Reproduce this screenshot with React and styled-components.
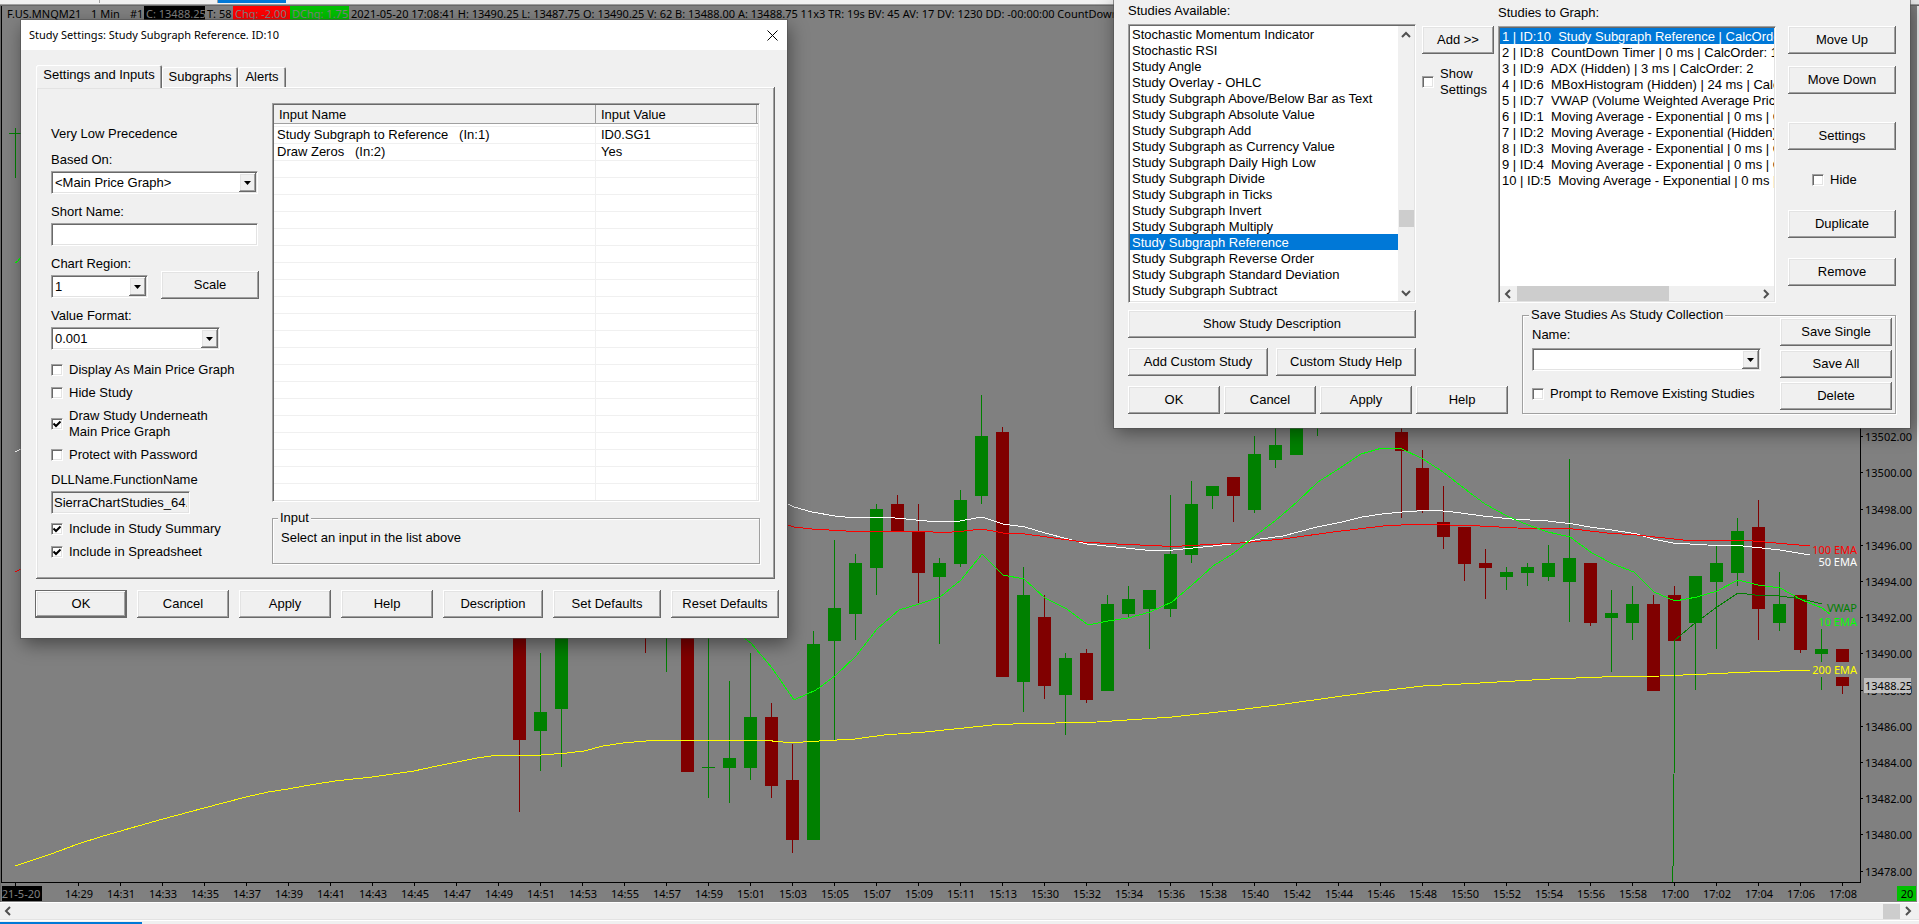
import React, { useState } from 'react';
import styled, { createGlobalStyle, css } from 'styled-components';

const INPUTS = [
  { name: 'Study Subgraph to Reference   (In:1)', value: 'ID0.SG1' },
  { name: 'Draw Zeros   (In:2)', value: 'Yes' },
];

const AVAILABLE = [
  'Stochastic Momentum Indicator',
  'Stochastic RSI',
  'Study Angle',
  'Study Overlay - OHLC',
  'Study Subgraph Above/Below Bar as Text',
  'Study Subgraph Absolute Value',
  'Study Subgraph Add',
  'Study Subgraph as Currency Value',
  'Study Subgraph Daily High Low',
  'Study Subgraph Divide',
  'Study Subgraph in Ticks',
  'Study Subgraph Invert',
  'Study Subgraph Multiply',
  'Study Subgraph Reference',
  'Study Subgraph Reverse Order',
  'Study Subgraph Standard Deviation',
  'Study Subgraph Subtract',
  'Study Subgraphs Add',
];

const TO_GRAPH = [
  '1 | ID:10  Study Subgraph Reference | CalcOrder: 10',
  '2 | ID:8  CountDown Timer | 0 ms | CalcOrder: 1',
  '3 | ID:9  ADX (Hidden) | 3 ms | CalcOrder: 2',
  '4 | ID:6  MBoxHistogram (Hidden) | 24 ms | CalcOrder: 3',
  '5 | ID:7  VWAP (Volume Weighted Average Price) | 0 ms',
  '6 | ID:1  Moving Average - Exponential | 0 ms | CalcOrder: 5',
  '7 | ID:2  Moving Average - Exponential (Hidden) | 0 ms',
  '8 | ID:3  Moving Average - Exponential | 0 ms | CalcOrder: 7',
  '9 | ID:4  Moving Average - Exponential | 0 ms | CalcOrder: 8',
  '10 | ID:5  Moving Average - Exponential | 0 ms | CalcOrder: 9',
];

// slot, direction, high, low, body top, body bottom
const CANDLES = [
  [24, 'd', 600, 812, 600, 740],
  [25, 'u', 653, 771, 712, 731],
  [26, 'u', 600, 767, 600, 709],
  [30, 'd', 600, 653, 600, 610],
  [31, 'u', 600, 672, 600, 610],
  [32, 'd', 600, 772, 600, 772],
  [33, 'u', 600, 798, 767, 768],
  [34, 'u', 681, 803, 758, 768],
  [35, 'u', 653, 780, 717, 768],
  [36, 'd', 703, 798, 717, 786],
  [37, 'd', 744, 853, 780, 840],
  [38, 'u', 631, 840, 644, 840],
  [39, 'u', 540, 740, 608, 641],
  [40, 'u', 554, 640, 563, 614],
  [41, 'u', 504, 595, 509, 568],
  [42, 'd', 495, 532, 504, 532],
  [43, 'd', 504, 603, 532, 573],
  [44, 'u', 558, 644, 563, 577],
  [45, 'u', 490, 567, 500, 564],
  [46, 'u', 395, 504, 436, 496],
  [47, 'd', 427, 677, 432, 677],
  [48, 'u', 567, 712, 595, 682],
  [49, 'd', 595, 699, 617, 686],
  [50, 'u', 653, 735, 658, 695],
  [51, 'd', 649, 703, 653, 700],
  [52, 'u', 595, 691, 604, 691],
  [53, 'u', 586, 618, 599, 614],
  [54, 'u', 590, 649, 590, 609],
  [55, 'u', 495, 617, 554, 609],
  [56, 'u', 481, 563, 504, 555],
  [57, 'u', 486, 509, 486, 496],
  [58, 'd', 477, 522, 477, 496],
  [59, 'u', 436, 513, 454, 510],
  [60, 'u', 410, 468, 445, 460],
  [61, 'u', 410, 455, 410, 455],
  [62, 'u', 410, 436, 410, 412],
  [66, 'd', 410, 518, 432, 451],
  [67, 'd', 450, 513, 468, 510],
  [68, 'd', 486, 549, 522, 537],
  [69, 'd', 527, 581, 527, 564],
  [70, 'd', 549, 599, 563, 568],
  [71, 'u', 567, 590, 572, 577],
  [72, 'u', 563, 586, 567, 573],
  [73, 'u', 545, 581, 563, 577],
  [74, 'u', 459, 622, 558, 582],
  [75, 'd', 563, 626, 563, 623],
  [76, 'u', 590, 672, 613, 618],
  [77, 'u', 586, 640, 604, 623],
  [78, 'd', 595, 691, 604, 691],
  [79, 'd', 586, 686, 595, 641],
  [80, 'u', 576, 690, 576, 623],
  [81, 'u', 546, 649, 563, 582],
  [82, 'u', 518, 586, 531, 573],
  [83, 'd', 500, 640, 527, 609],
  [84, 'u', 572, 631, 604, 623],
  [85, 'd', 595, 653, 595, 650],
  [86, 'u', 629, 690, 649, 654],
  [87, 'd', 649, 694, 649, 686],
];

const EMA_200 =
  '15,866 51,854 78,844 100,837 131,828 163,819 204,808 246,797 268,792 288,789 310,785 335,781 372,777 414,771 437,766 457,762 477,758 498,755 541,755 567,753 584,751 603,746 623,743 657,740 762,740 783,742 803,742 819,741 855,739 884,735 925,732 964,728 992,725 1013,724 1056,723 1097,722 1127,720 1172,717 1190,715 1237,710 1285,704 1335,697 1380,691 1423,686 1480,683 1550,679 1602,677 1660,676 1707,674 1750,672 1810,670';
const EMA_50 =
  '788,504 794,507 812,512 835,516 855,518 885,517 916,520 937,522 960,521 982,517 1003,524 1025,527 1045,533 1087,544 1145,550 1173,550 1213,546 1240,543 1260,539 1283,536 1317,527 1342,522 1362,517 1382,514 1402,512 1433,510 1453,512 1483,516 1512,519 1548,521 1573,524 1590,527 1612,530 1637,534 1653,539 1673,543 1707,545 1743,546 1780,550 1810,555';
const EMA_100 =
  '788,525 794,527 812,529 846,531 925,531 941,533 964,531 982,529 1003,533 1025,534 1047,537 1083,542 1117,544 1162,546 1182,546 1200,545 1240,543 1283,539 1333,532 1383,526 1420,524 1480,526 1517,528 1573,529 1607,533 1637,535 1683,540 1742,540 1810,546';
const EMA_10 =
  '744,638 751,643 772,668 794,700 816,690 835,676 856,656 877,629 899,610 919,604 940,597 961,580 982,554 1003,575 1024,579 1045,598 1067,609 1088,625 1108,621 1128,618 1150,612 1172,602 1192,585 1213,566 1234,553 1255,536 1275,521 1297,502 1318,482 1340,468 1361,454 1382,448 1402,449 1423,459 1443,472 1465,489 1485,504 1507,516 1528,525 1548,532 1570,537 1592,553 1613,564 1634,572 1654,592 1675,601 1697,597 1717,591 1738,580 1758,585 1780,588 1802,600 1822,608 1830,614';
const VWAP =
  '1672,882 1672,867 1673,866 1673,777 1674,776 1675,640 1695,623 1702,618 1717,607 1738,593 1755,595 1780,596 1802,599 1822,604';

const PRICES = [
  [13502, 436], [13500, 472], [13498, 509], [13496, 545], [13494, 581], [13492, 617], [13490, 653],
  [13488, 690], [13486, 726], [13484, 762], [13482, 798], [13480, 834], [13478, 871],
];

const timeLabels = () => {
  const out = [];
  const push = (hour, from, to) => {
    for (let m = from; m <= to; m += 2) out.push(`${hour}:${String(m).padStart(2, '0')}`);
  };
  push(14, 29, 59);
  push(15, 1, 13);
  push(15, 30, 58);
  push(17, 0, 8);
  return out;
};

const slotX = (slot) => 15 + slot * 21;

const Chevron = ({ dir }) => {
  const paths = { up: 'M1 6 L5 2 L9 6', down: 'M1 3 L5 7 L9 3', left: 'M6 1 L2 5 L6 9', right: 'M3 1 L7 5 L3 9' };
  return (
    <svg width="10" height="10" viewBox="0 0 10 10">
      <path d={paths[dir]} fill="none" stroke="#505050" strokeWidth="2" />
    </svg>
  );
};

const Chart = () => (
  <ChartSvg viewBox="1 20 1916 882" preserveAspectRatio="xMaxYMax meet">
    <g shapeRendering="crispEdges">
      <rect x="1" y="20" width="1" height="863" />
      <rect x="1" y="882" width="1860" height="1" />
      <rect x="1860" y="20" width="1" height="863" />
      <rect x="15" y="883" width="1" height="3" />
      {timeLabels().map((t, i) => (
        <rect key={t} x={78 + i * 42} y="883" width="1" height="3" />
      ))}
      {PRICES.map(([p, y]) => (
        <rect key={p} x="1861" y={y} width="2" height="1" />
      ))}
      <g fill="#008000">
        <rect x="15" y="128" width="1" height="50" />
        <rect x="9" y="133" width="13" height="1" />
      </g>
      {CANDLES.map(([slot, dir, high, low, top, bottom]) => (
        <g key={slot} fill={dir === 'u' ? '#008000' : '#800000'}>
          <rect x={slotX(slot)} y={high} width="1" height={low - high} />
          <rect x={slotX(slot) - 6} y={top} width="13" height={bottom - top} />
        </g>
      ))}
      <g fill="none" strokeWidth="1">
        <polyline points={EMA_200} stroke="#ffff00" />
        <polyline points={EMA_50} stroke="#ffffff" />
        <polyline points={EMA_100} stroke="#ff0000" />
        <polyline points={VWAP} stroke="#008000" />
        <polyline points={EMA_10} stroke="#00ff00" />
        <path d="M15 263 L18 261 L21 257" stroke="#00ff00" />
        <path d="M15 452 L21 449" stroke="#ffffff" />
        <path d="M15 572 L21 569" stroke="#ff0000" />
      </g>
      <rect x="1817" y="615" width="41" height="14" fill="#808080" />
      <rect x="1812" y="662" width="46" height="15" fill="#808080" />
    </g>
    <g textAnchor="end">
      <text x="1857" y="554" fill="#ff0000">100 EMA</text>
      <text x="1857" y="566" fill="#ffffff">50 EMA</text>
      <text x="1857" y="612" fill="#008000">VWAP</text>
      <text x="1857" y="626" fill="#00ff00">10 EMA</text>
      <text x="1857" y="674" fill="#ffff00">200 EMA</text>
    </g>
    {PRICES.map(([p, y]) => (
      <text key={p} x="1865" y={y + 5}>{p}.00</text>
    ))}
    <rect x="1864" y="678" width="47" height="15" fill="#c0c0c0" />
    <text x="1865" y="690">13488.25</text>
    <g textAnchor="middle">
      {timeLabels().map((t, i) => (
        <text key={t} x={79 + i * 42} y="898">{t}</text>
      ))}
      <rect x="2" y="886" width="40" height="15" />
      <text x="21" y="898" fill="#808080">21-5-20</text>
      <rect x="1897" y="886" width="19" height="15" fill="#00c000" />
      <text x="1907" y="898">20</text>
    </g>
  </ChartSvg>
);

const Combo = ({ id, value, width, label }) => (
  <ComboBox $width={width}>
    <ComboSelect id={id} defaultValue={value} aria-label={label}>
      <option value={value}>{value}</option>
    </ComboSelect>
    <ComboArrow aria-hidden="true">
      <svg width="7" height="4" viewBox="0 0 7 4">
        <path d="M0 0 H7 L3.5 4 Z" />
      </svg>
    </ComboArrow>
  </ComboBox>
);

const Check = ({ children, checked = false }) => {
  const [on, setOn] = useState(checked);
  return (
    <CheckLabel>
      <CheckInput type="checkbox" checked={on} onChange={() => setOn(!on)} />
      <span>{children}</span>
    </CheckLabel>
  );
};

const StudySettings = () => (
  <SettingsWindow role="dialog" aria-label="Study Settings">
    <TitleBar>
      Study Settings: Study Subgraph Reference. ID:10
      <CloseButton aria-label="Close">
        <svg width="11" height="11" viewBox="0 0 11 11">
          <path d="M0.5 0.5 L10.5 10.5 M10.5 0.5 L0.5 10.5" stroke="#000" fill="none" />
        </svg>
      </CloseButton>
    </TitleBar>
    <SettingsBody>
      <Tabs role="tablist">
        <Tab role="tab" $active $width={126}>Settings and Inputs</Tab>
        <Tab role="tab" $width={76}>Subgraphs</Tab>
        <Tab role="tab" $width={48}>Alerts</Tab>
      </Tabs>
      <TabPane>
        <FieldColumn>
          <div>Very Low Precedence</div>
          <Field>
            <label htmlFor="based-on">Based On:</label>
            <Combo id="based-on" value="<Main Price Graph>" width={207} />
          </Field>
          <Field>
            <label htmlFor="short-name">Short Name:</label>
            <TextInput id="short-name" type="text" $width={207} />
          </Field>
          <RegionRow>
            <Field>
              <label htmlFor="region">Chart Region:</label>
              <Combo id="region" value="1" width={97} />
            </Field>
            <Button $width={98}>Scale</Button>
          </RegionRow>
          <Field>
            <label htmlFor="format">Value Format:</label>
            <Combo id="format" value="0.001" width={169} />
          </Field>
          <Checks>
            <Check>Display As Main Price Graph</Check>
            <Check>Hide Study</Check>
            <Check checked>Draw Study Underneath<br />Main Price Graph</Check>
            <Check>Protect with Password</Check>
            <Field>
              <label htmlFor="dll">DLLName.FunctionName</label>
              <TextInput id="dll" type="text" readOnly defaultValue="SierraChartStudies_64.scsf" $width={139} />
            </Field>
            <Check checked>Include in Study Summary</Check>
            <Check checked>Include in Spreadsheet</Check>
          </Checks>
        </FieldColumn>
        <InputColumn>
          <TableFrame>
            <InputTable>
              <colgroup>
                <col width="322" />
                <col width="161" />
                <col />
              </colgroup>
              <thead>
                <tr>
                  <th>Input Name</th>
                  <th>Input Value</th>
                  <th />
                </tr>
              </thead>
              <tbody>
                {Array.from({ length: 22 }, (_, i) => (
                  <tr key={i}>
                    <td>{INPUTS[i]?.name}</td>
                    <td>{INPUTS[i]?.value}</td>
                    <td />
                  </tr>
                ))}
              </tbody>
            </InputTable>
          </TableFrame>
          <InputGroup>
            <legend>Input</legend>
            Select an input in the list above
          </InputGroup>
        </InputColumn>
      </TabPane>
      <ButtonRow $gap={10}>
        <Button $width={92} $default>OK</Button>
        <Button $width={92}>Cancel</Button>
        <Button $width={92}>Apply</Button>
        <Button $width={92}>Help</Button>
        <Button $width={100}>Description</Button>
        <Button $width={108}>Set Defaults</Button>
        <Button $width={108}>Reset Defaults</Button>
      </ButtonRow>
    </SettingsBody>
  </SettingsWindow>
);

const ChartStudies = () => {
  const [available, setAvailable] = useState(13);
  const [graphed, setGraphed] = useState(0);

  return (
    <StudiesWindow role="dialog" aria-label="Chart Studies">
      <StudiesTop>
        <ListColumn $top={3} $gap={5} $width={288}>
          <div>Studies Available:</div>
          <ListFrame>
            <List role="listbox" aria-label="Studies Available">
              {AVAILABLE.map((s, i) => (
                <ListItem key={s} role="option" $selected={i === available} onClick={() => setAvailable(i)}>{s}</ListItem>
              ))}
            </List>
            <VScroll>
              <Chevron dir="up" />
              <VTrack><VThumb /></VTrack>
              <Chevron dir="down" />
            </VScroll>
          </ListFrame>
        </ListColumn>
        <AddColumn>
          <Button $width={72}>Add &gt;&gt;</Button>
          <Check>Show<br />Settings</Check>
        </AddColumn>
        <ListColumn $top={5} $gap={5} $width={278}>
          <div>Studies to Graph:</div>
          <ListFrame $stacked>
            <List role="listbox" aria-label="Studies to Graph">
              {TO_GRAPH.map((s, i) => (
                <ListItem key={s} role="option" $selected={i === graphed} onClick={() => setGraphed(i)}>{s}</ListItem>
              ))}
            </List>
            <HScroll>
              <Chevron dir="left" />
              <HTrack><HThumb /></HTrack>
              <Chevron dir="right" />
            </HScroll>
          </ListFrame>
        </ListColumn>
        <ActionColumn>
          <ButtonStack $gap={12}>
            <Button>Move Up</Button>
            <Button>Move Down</Button>
          </ButtonStack>
          <Button>Settings</Button>
          <HideRow><Check>Hide</Check></HideRow>
          <ButtonStack $gap={20}>
            <Button>Duplicate</Button>
            <Button>Remove</Button>
          </ButtonStack>
        </ActionColumn>
      </StudiesTop>
      <StudiesBottom>
        <CommandColumn>
          <Button $width={288}>Show Study Description</Button>
          <ButtonRow $gap={8}>
            <Button $width={140}>Add Custom Study</Button>
            <Button $width={140}>Custom Study Help</Button>
          </ButtonRow>
          <ButtonRow $gap={4}>
            <Button $width={92}>OK</Button>
            <Button $width={92}>Cancel</Button>
            <Button $width={92}>Apply</Button>
            <Button $width={92}>Help</Button>
          </ButtonRow>
        </CommandColumn>
        <CollectionGroup>
          <legend>Save Studies As Study Collection</legend>
          <CollectionBody>
            <CollectionFields>
              <label htmlFor="collection">Name:</label>
              <Combo id="collection" value="" width={229} />
              <Check>Prompt to Remove Existing Studies</Check>
            </CollectionFields>
            <CollectionButtons>
              <Button $width={112}>Save Single</Button>
              <Button $width={112}>Save All</Button>
              <Button $width={112}>Delete</Button>
            </CollectionButtons>
          </CollectionBody>
        </CollectionGroup>
      </StudiesBottom>
    </StudiesWindow>
  );
};

const App = () => (
  <>
    <GlobalStyle />
    <Page>
      <TopStrip>
        <StripTab $width={100} />
        <StripTab $width={118} />
        <StripTab $width={69} $active />
      </TopStrip>
      <ChartFrame>
        <ChartHeader>
          <HeaderItem $width={84}>F.US.MNQM21</HeaderItem>
          <HeaderItem $width={39}>1 Min</HeaderItem>
          <HeaderItem $width={16}>#1</HeaderItem>
          <HeaderItem $width={61} $bg="#000000">C: 13488.25</HeaderItem>
          <HeaderItem $width={28}>T: 58</HeaderItem>
          <HeaderItem $width={57} $bg="#ff0000">Chg: -2.00</HeaderItem>
          <HeaderItem $width={59} $bg="#00c000">DChg: 1.75</HeaderItem>
          <HeaderItem>
            2021-05-20 17:08:41 H: 13490.25 L: 13487.75 O: 13490.25 V: 62 B: 13488.00 A: 13488.75 11x3 TR: 19s BV: 45
            AV: 17 DV: 1230 DD: -00:00:00 CountDown
          </HeaderItem>
        </ChartHeader>
        <Chart />
      </ChartFrame>
      <PageScroll>
        <Chevron dir="left" />
        <PageTrack><PageThumb /></PageTrack>
        <Chevron dir="right" />
      </PageScroll>
      <BottomStrip><BottomTab /></BottomStrip>
      <StudySettings />
      <ChartStudies />
    </Page>
  </>
);

const GlobalStyle = createGlobalStyle`
  * {
    box-sizing: border-box;
  }

  body {
    margin: 0;
    background: #f0f0f0;
    color: #000;
    font: 13px/16px "Liberation Sans", Arial, sans-serif;
  }

  button, input, select {
    font: inherit;
    color: inherit;
  }
`;

const chartFont = css`
  font-family: "Noto Sans", "Open Sans", sans-serif;
`;

const raised = css`
  box-shadow: inset -1px -1px 0 #696969, inset 1px 1px 0 #fff, inset -2px -2px 0 #a0a0a0, inset 2px 2px 0 #e3e3e3;
`;

const sunken = css`
  border: 1px solid;
  border-color: #a0a0a0 #fff #fff #a0a0a0;
  box-shadow: inset 1px 1px 0 #696969, inset -1px -1px 0 #e3e3e3;
`;

const etched = css`
  margin: 0;
  border: 1px solid #a0a0a0;
  box-shadow: 1px 1px 0 #fff, inset 1px 1px 0 #fff;
`;

const Page = styled.main`
  position: relative;
  display: flex;
  flex-direction: column;
  min-height: 100vh;
  overflow: hidden;
`;

const TopStrip = styled.div`
  display: flex;
  height: 6px;
  border-bottom: 1px solid #696969;
  box-shadow: inset 0 -1px 0 #a0a0a0;
`;

const StripTab = styled.div`
  width: ${(p) => p.$width}px;
  height: 3px;
  border-right: 1px solid ${(p) => (p.$active ? '#f0f0f0' : '#a0a0a0')};
  background: ${(p) => (p.$active ? '#0078d7' : '#f0f0f0')};
`;

const ChartFrame = styled.section`
  flex: 1;
  display: flex;
  flex-direction: column;
  background: #808080;
  border-left: 1px solid #696969;
  border-right: 2px solid #f0f0f0;
`;

const ChartHeader = styled.div`
  ${chartFont}
  display: flex;
  height: 14px;
  padding-left: 3px;
  border-left: 1px solid #000;
  font-size: 11px;
  line-height: 15px;
  overflow: hidden;
`;

const HeaderItem = styled.div`
  flex: none;
  width: ${(p) => (p.$width ? `${p.$width}px` : 'auto')};
  padding-left: 2px;
  background: ${(p) => p.$bg || 'transparent'};
  color: ${(p) => (p.$bg ? '#808080' : '#000')};
  white-space: nowrap;
`;

const ChartSvg = styled.svg`
  ${chartFont}
  display: block;
  width: 100%;
  flex: 1;
  font-size: 11px;
`;

const PageScroll = styled.div`
  display: flex;
  align-items: center;
  height: 18px;
  padding: 0 6px 0 4px;
  border-top: 1px solid #fff;
  border-bottom: 1px solid #e3e3e3;
`;

const PageTrack = styled.div`
  flex: 1;
  display: flex;
  justify-content: flex-end;
  padding-right: 3px;
`;

const PageThumb = styled.div`
  width: 17px;
  height: 15px;
  background: #cdcdcd;
`;

const BottomStrip = styled.div`
  height: 4px;
  padding-top: 1px;
  border-top: 1px solid #fff;
`;

const BottomTab = styled.div`
  width: 142px;
  height: 2px;
  background: #0078d7;
`;

const SettingsWindow = styled.section`
  position: absolute;
  left: 21px;
  top: 20px;
  width: 766px;
  background: #f0f0f0;
  box-shadow: 0 0 0 1px rgba(80, 80, 80, 0.6), 2px 6px 18px rgba(0, 0, 0, 0.45);
`;

const TitleBar = styled.header`
  ${chartFont}
  display: flex;
  align-items: center;
  justify-content: space-between;
  height: 30px;
  padding: 0 7px 0 8px;
  background: #fff;
  font-size: 11px;
`;

const CloseButton = styled.button`
  display: flex;
  padding: 2px;
  border: 0;
  background: none;
`;

const SettingsBody = styled.div`
  padding: 15px 8px 20px 14px;
`;

const Tabs = styled.div`
  display: flex;
  align-items: flex-end;
  height: 22px;
  padding-left: 1px;
`;

const Tab = styled.button`
  position: relative;
  width: ${(p) => p.$width}px;
  height: ${(p) => (p.$active ? 23 : 20)}px;
  margin-bottom: ${(p) => (p.$active ? '-1px' : 0)};
  padding: ${(p) => (p.$active ? '0 0 3px' : 0)};
  border: 0;
  border-radius: 2px 2px 0 0;
  background: #f0f0f0;
  box-shadow: inset 1px 1px 0 #fff, inset -1px 0 0 #696969, inset -2px 0 0 #a0a0a0;
  white-space: nowrap;
`;

const TabPane = styled.div`
  display: flex;
  height: 492px;
  margin: 0 4px 11px 1px;
  padding: 16px 15px 15px 15px;
  ${raised}
`;

const FieldColumn = styled.div`
  display: flex;
  flex-direction: column;
  gap: 10px;
  width: 221px;
  padding-top: 23px;
`;

const Field = styled.div`
  display: flex;
  flex-direction: column;
  align-items: flex-start;
  gap: 3px;
`;

const RegionRow = styled.div`
  display: flex;
  align-items: center;
  justify-content: space-between;
  height: 42px;
  padding-right: 13px;

  button {
    align-self: flex-end;
    margin-bottom: -1px;
  }
`;

const Checks = styled.div`
  display: flex;
  flex-direction: column;
  gap: 7px;
  padding-top: 2px;

  ${Field} {
    padding-top: 2px;
  }
`;

const ComboBox = styled.div`
  display: flex;
  width: ${(p) => p.$width}px;
  height: 23px;
  padding: 1px;
  background: #fff;
  ${sunken}
`;

const ComboSelect = styled.select`
  flex: 1;
  min-width: 0;
  padding: 0 2px;
  border: 0;
  background: transparent;
  appearance: none;
`;

const ComboArrow = styled.span`
  display: flex;
  align-items: center;
  justify-content: center;
  width: 17px;
  background: #f0f0f0;
  pointer-events: none;
  ${raised}
`;

const TextInput = styled.input`
  width: ${(p) => p.$width}px;
  height: 23px;
  padding: 1px 2px;
  background: ${(p) => (p.readOnly ? '#f0f0f0' : '#fff')};
  ${sunken}
`;

const CheckLabel = styled.label`
  display: flex;
  align-items: center;
  gap: 6px;
`;

const CheckInput = styled.input`
  flex: none;
  width: 12px;
  height: 12px;
  margin: 0;
  appearance: none;
  background: #fff;
  ${sunken}

  &:checked {
    background: #fff
      url("data:image/svg+xml,%3Csvg xmlns='http://www.w3.org/2000/svg' viewBox='0 0 10 10'%3E%3Cpath d='M1.5 4.5 L4 7 L8.5 2.5' fill='none' stroke='black' stroke-width='2'/%3E%3C/svg%3E")
      center / 10px no-repeat;
  }
`;

const Button = styled.button`
  width: ${(p) => (p.$width ? `${p.$width}px` : '100%')};
  height: 28px;
  padding: 0;
  border: ${(p) => (p.$default ? '1px solid #696969' : 0)};
  background: #f0f0f0;
  white-space: nowrap;
  ${raised}
`;

const ButtonRow = styled.div`
  display: flex;
  gap: ${(p) => p.$gap}px;
`;

const InputColumn = styled.div`
  flex: 1;
  display: flex;
  flex-direction: column;
  gap: 8px;
`;

const TableFrame = styled.div`
  height: 399px;
  padding: 1px;
  background: #fff;
  overflow: hidden;
  ${sunken}
`;

const InputTable = styled.table`
  width: 100%;
  table-layout: fixed;
  border-collapse: separate;
  border-spacing: 0;
  white-space: pre;

  th {
    height: 19px;
    padding: 2px 5px 0;
    border-right: 1px solid #a0a0a0;
    border-bottom: 1px solid #a0a0a0;
    background: #f0f0f0;
    font-weight: normal;
    text-align: left;
  }

  tbody::before {
    content: '';
    display: block;
    height: 2px;
  }

  td {
    height: 17px;
    padding: 0 3px;
    border-top: 1px solid #f0f0f0;
    border-right: 1px solid #f0f0f0;
  }

  td + td {
    padding-left: 5px;
  }

  th:last-child,
  td:last-child {
    padding: 0;
    border-right: 0;
  }
`;

const InputGroup = styled.fieldset`
  height: 54px;
  padding: 4px 8px;
  ${etched}

  legend {
    padding: 0 2px;
    margin-left: -3px;
    background: #f0f0f0;
  }
`;

const StudiesWindow = styled.section`
  position: absolute;
  right: 9px;
  top: 0;
  width: 796px;
  height: 428px;
  padding: 0 14px;
  background: #f0f0f0;
  box-shadow: 0 0 0 1px rgba(80, 80, 80, 0.6), 2px 4px 18px rgba(0, 0, 0, 0.45);
`;

const StudiesTop = styled.div`
  display: flex;
  height: 303px;
`;

const ListColumn = styled.div`
  display: flex;
  flex-direction: column;
  gap: ${(p) => p.$gap}px;
  width: ${(p) => p.$width}px;
  padding-top: ${(p) => p.$top}px;
`;

const ListFrame = styled.div`
  flex: 1;
  display: flex;
  flex-direction: ${(p) => (p.$stacked ? 'column' : 'row')};
  min-height: 0;
  padding: 1px;
  background: #fff;
  ${sunken}
`;

const List = styled.ul`
  flex: 1;
  min-height: 0;
  margin: 0;
  padding: 0;
  list-style: none;
  overflow: hidden;
`;

const ListItem = styled.li`
  height: 16px;
  padding-left: 2px;
  background: ${(p) => (p.$selected ? '#0078d7' : 'transparent')};
  color: ${(p) => (p.$selected ? '#fff' : '#000')};
  line-height: 17px;
  white-space: pre;
`;

const VScroll = styled.div`
  display: flex;
  flex-direction: column;
  align-items: center;
  width: 16px;
  padding: 5px 0 3px;
  background: #f0f0f0;
`;

const VTrack = styled.div`
  flex: 1;
  width: 15px;
  padding-top: 169px;
`;

const VThumb = styled.div`
  height: 17px;
  background: #cdcdcd;
`;

const HScroll = styled.div`
  display: flex;
  align-items: center;
  height: 15px;
  padding: 0 3px 0 4px;
  background: #f0f0f0;
`;

const HTrack = styled.div`
  flex: 1;
  padding: 0 3px;
`;

const HThumb = styled.div`
  width: 63%;
  height: 15px;
  background: #cdcdcd;
`;

const AddColumn = styled.div`
  display: flex;
  flex-direction: column;
  gap: 12px;
  width: 82px;
  padding: 26px 4px 0 6px;
`;

const ActionColumn = styled.div`
  display: flex;
  flex-direction: column;
  gap: 22px;
  width: 120px;
  padding: 26px 0 0 12px;
`;

const ButtonStack = styled.div`
  display: flex;
  flex-direction: column;
  gap: ${(p) => p.$gap}px;
  padding-bottom: 6px;
`;

const HideRow = styled.div`
  padding-left: 24px;
`;

const StudiesBottom = styled.div`
  display: flex;
  align-items: flex-start;
  justify-content: space-between;
  padding-top: 4px;
`;

const CommandColumn = styled.div`
  display: flex;
  flex-direction: column;
  gap: 10px;
  padding-top: 3px;
`;

const CollectionGroup = styled.fieldset`
  width: 374px;
  height: 107px;
  padding: 0 3px 0 9px;
  ${etched}

  legend {
    padding: 0 2px;
    margin-left: -3px;
    background: #f0f0f0;
  }
`;

const CollectionBody = styled.div`
  display: flex;
  justify-content: space-between;
`;

const CollectionFields = styled.div`
  display: flex;
  flex-direction: column;
  gap: 5px;
  padding-top: 4px;

  ${CheckLabel} {
    padding-top: 10px;
  }
`;

const CollectionButtons = styled.div`
  display: flex;
  flex-direction: column;
  gap: 4px;
  margin-top: -5px;
`;

export default App;
